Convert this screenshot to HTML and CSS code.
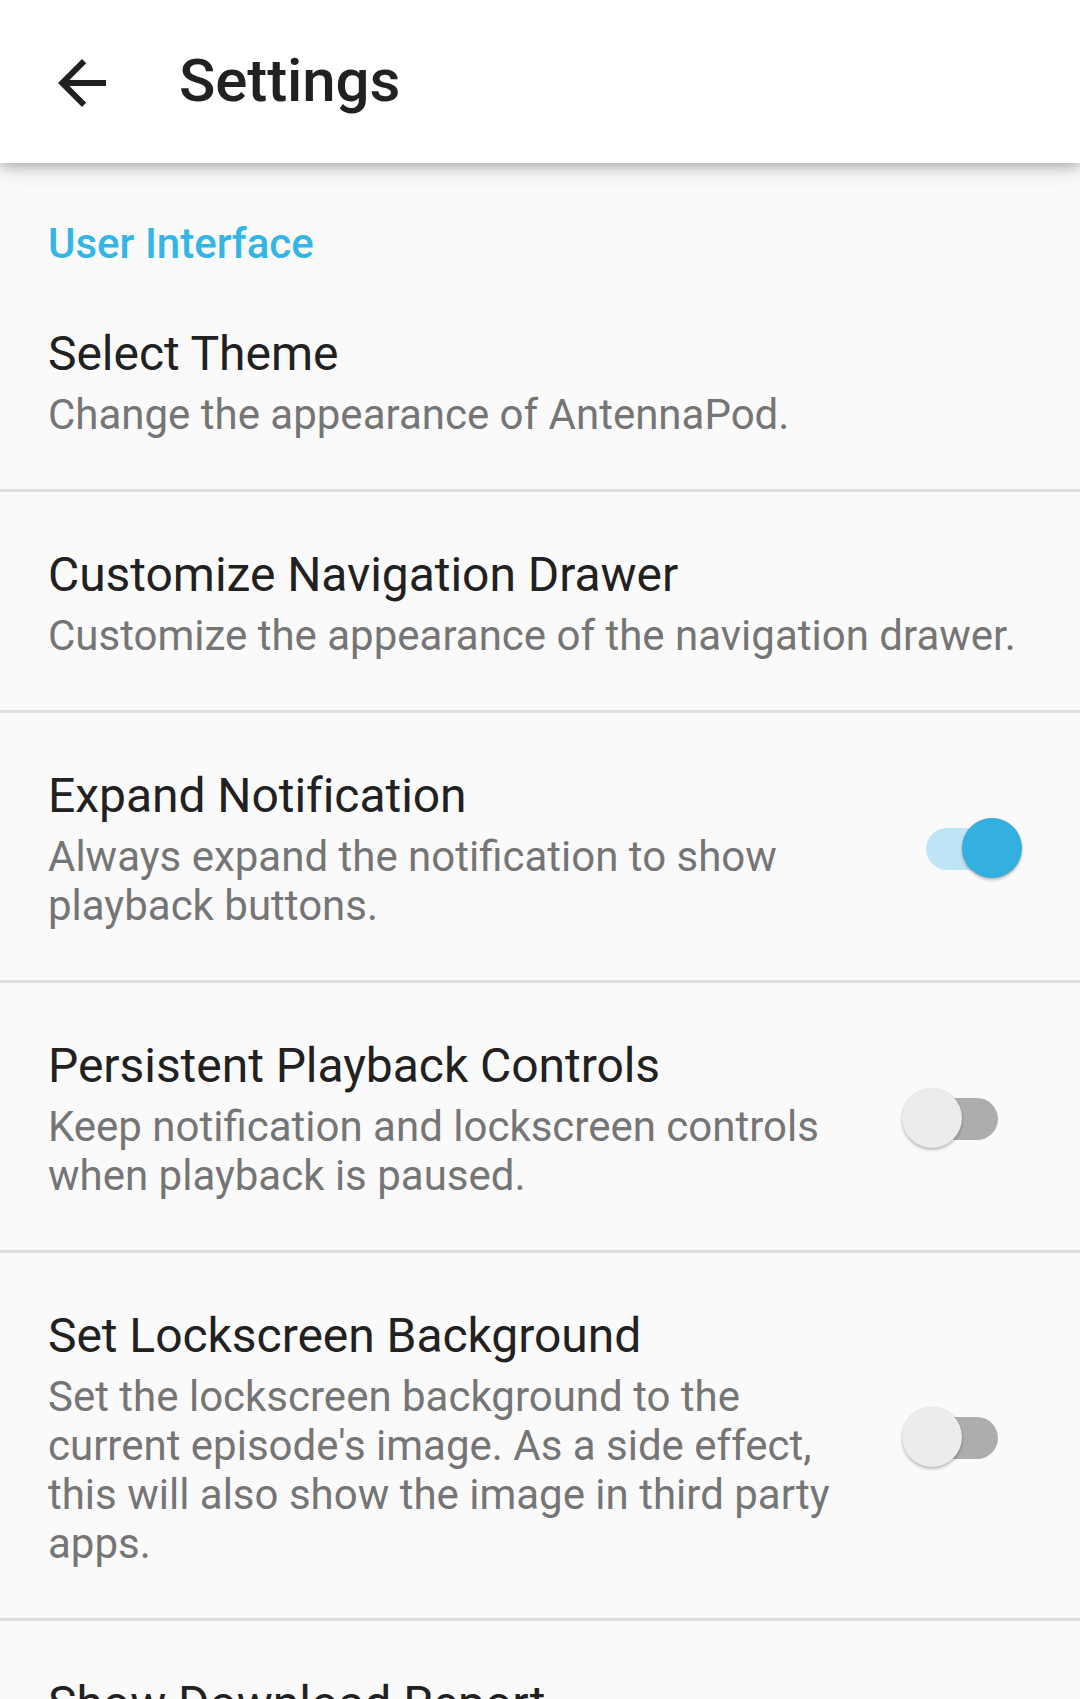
FILE: index.html
```html
<!DOCTYPE html>
<html>
<head>
<meta charset="utf-8">
<link rel="stylesheet" href="styles.css">
</head>
<body>
<header class="toolbar">
  <div class="back">
    <svg viewBox="0 0 24 24" width="72" height="72"><path d="M20 11H7.83l5.59-5.59L12 4l-8 8 8 8 1.41-1.41L7.83 13H20v-2z" fill="#212121"/></svg>
  </div>
  <h1 class="title">Settings</h1>
</header>
<main class="list">
  <div class="category">User Interface</div>
  <div class="pref">
    <div class="text">
      <div class="pref-title">Select Theme</div>
      <div class="pref-sub">Change the appearance of AntennaPod.</div>
    </div>
  </div>
  <div class="pref">
    <div class="text">
      <div class="pref-title">Customize Navigation Drawer</div>
      <div class="pref-sub">Customize the appearance of the navigation drawer.</div>
    </div>
  </div>
  <div class="pref">
    <div class="text">
      <div class="pref-title">Expand Notification</div>
      <div class="pref-sub">Always expand the notification to show playback buttons.</div>
    </div>
    <div class="switch on"><span class="track"></span><span class="thumb"></span></div>
  </div>
  <div class="pref">
    <div class="text">
      <div class="pref-title">Persistent Playback Controls</div>
      <div class="pref-sub">Keep notification and lockscreen controls when playback is paused.</div>
    </div>
    <div class="switch"><span class="track"></span><span class="thumb"></span></div>
  </div>
  <div class="pref">
    <div class="text">
      <div class="pref-title">Set Lockscreen Background</div>
      <div class="pref-sub">Set the lockscreen background to the current episode's image. As a side effect, this will also show the image in third party apps.</div>
    </div>
    <div class="switch"><span class="track"></span><span class="thumb"></span></div>
  </div>
  <div class="pref last">
    <div class="text">
      <div class="pref-title">Show Download Report</div>
      <div class="pref-sub">If downloads fail, generate a report that shows the details of the failure.</div>
    </div>
  </div>
</main>
</body>
</html>
```
FILE: styles.css
```css
* { box-sizing: border-box; }
html, body {
  margin: 0;
  padding: 0;
  background: #fafafa;
  font-family: Roboto, "Noto Sans", sans-serif;
  overflow: hidden;
}
.toolbar {
  height: 163px;
  background: #ffffff;
  display: flex;
  align-items: center;
  position: relative;
  z-index: 2;
  box-shadow: 0 4px 10px rgba(0,0,0,0.22), 0 8px 22px rgba(0,0,0,0.10);
}
.back {
  width: 72px;
  height: 72px;
  margin-left: 46px;
  margin-top: 2px;
  display: flex;
}
.title {
  margin: 0 0 0 61px;
  font-size: 60px;
  font-weight: 500;
  color: #212121;
  line-height: 70px;
  margin-top: -1px;
  letter-spacing: -0.1px;
}
.list {
  display: flex;
  flex-direction: column;
}
.category {
  padding: 56px 48px 0 48px;
  font-size: 42px;
  font-weight: 500;
  line-height: 49px;
  color: #33b5e5;
  height: 108px;
}
.pref {
  display: flex;
  align-items: center;
  padding: 55px 48px 50px 48px;
  border-bottom: 3px solid #dedede;
}
.pref.last { border-bottom: none; }
.text {
  flex: 1;
  display: flex;
  flex-direction: column;
  gap: 8px;
}
.pref-title {
  font-size: 48px;
  line-height: 56px;
  color: #212121;
  letter-spacing: -0.05px;
}
.pref-sub {
  font-size: 42px;
  line-height: 49px;
  color: #757575;
}
.switch {
  position: relative;
  width: 120px;
  height: 62px;
  margin-left: 32px;
  margin-right: 10px;
  flex: none;
}
.track {
  position: absolute;
  left: 24px;
  top: 10px;
  width: 72px;
  height: 42px;
  border-radius: 21px;
  background: #adadad;
}
.thumb {
  position: absolute;
  left: 0;
  top: 0;
  width: 60px;
  height: 60px;
  border-radius: 50%;
  background: #ececec;
  box-shadow: 0 2px 3px rgba(0,0,0,0.25), 0 0 1px rgba(0,0,0,0.12);
}
.switch.on .track { background: #bde5f5; }
.switch.on .thumb {
  left: 60px;
  background: #33b0e0;
}
```
